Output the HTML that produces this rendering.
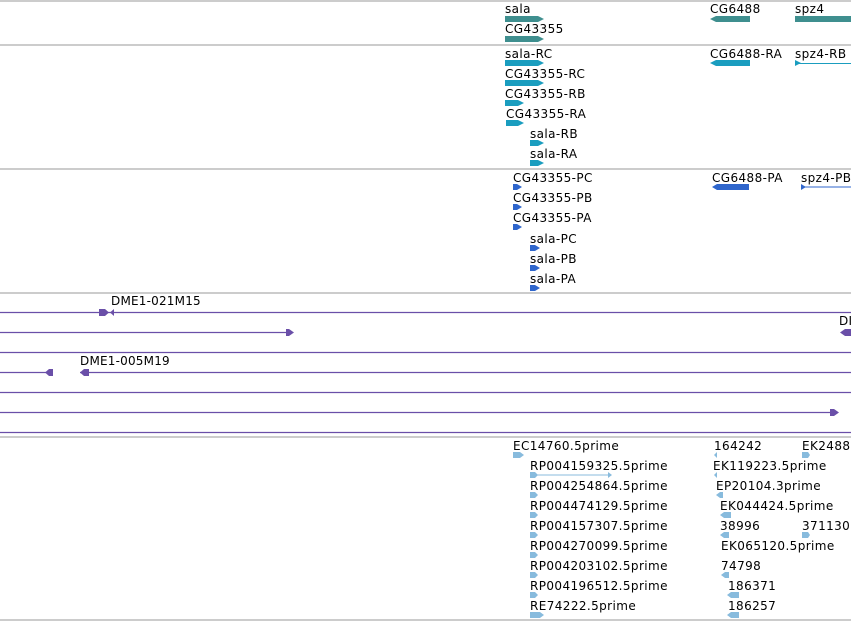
<!DOCTYPE html>
<html><head><meta charset="utf-8"><style>
html,body{margin:0;padding:0;background:#fff;width:851px;height:621px;overflow:hidden}
svg{display:block}
text{font-family:"DejaVu Sans","Liberation Sans",sans-serif;font-size:12px;fill:#000;letter-spacing:0.4px}
.p{font-size:12px;letter-spacing:0.2px}
</style></head><body>
<svg width="851" height="621" viewBox="0 0 851 621">
<g stroke="#bbb" stroke-width="1.5">
<line x1="0" y1="1" x2="851" y2="1"/><line x1="0" y1="45" x2="851" y2="45"/>
<line x1="0" y1="169" x2="851" y2="169"/><line x1="0" y1="293" x2="851" y2="293"/>
<line x1="0" y1="437" x2="851" y2="437"/><line x1="0" y1="620" x2="851" y2="620"/>
</g>
<g fill="#3f8f8f">
<polygon points="505,16 538,16 544,19 538,22 505,22"/>
<polygon points="505,36 538,36 544,39 538,42 505,42"/>
<polygon points="716,16 750,16 750,22 716,22 710,19"/>
<rect x="795" y="16" width="56" height="6"/>
</g>
<text x="505" y="13">sala</text><text x="505" y="33">CG43355</text>
<text x="710" y="13">CG6488</text><text x="795" y="13">spz4</text>
<g fill="#1a9dbf" stroke="#1a9dbf">
<g stroke="none">
<polygon points="505,60 538,60 544,63 538,66 505,66"/>
<polygon points="505,80 538,80 544,83 538,86 505,86"/>
<polygon points="505,100 518,100 524,103 518,106 505,106"/>
<polygon points="506,120 518,120 524,123 518,126 506,126"/>
<polygon points="530,140 538,140 544,143 538,146 530,146"/>
<polygon points="530,160 538,160 544,163 538,166 530,166"/>
<polygon points="716,60 750,60 750,66 716,66 710,63"/>
<polygon points="795,60 801,63 795,66"/>
</g>
<line x1="795" y1="63.5" x2="851" y2="63.5" stroke-width="1"/>
</g>
<text x="505" y="58">sala-RC</text><text x="505" y="78">CG43355-RC</text>
<text x="505" y="98">CG43355-RB</text><text x="506" y="118">CG43355-RA</text>
<text x="530" y="138">sala-RB</text><text x="530" y="158">sala-RA</text>
<text x="710" y="58">CG6488-RA</text><text x="795" y="58">spz4-RB</text>
<g fill="#2f66cc">
<polygon points="513,184 517,184 522,187 517,190 513,190"/>
<polygon points="513,204 517,204 522,207 517,210 513,210"/>
<polygon points="513,224 517,224 522,227 517,230 513,230"/>
<polygon points="530,245 535,245 540,248 535,251 530,251"/>
<polygon points="530,265 535,265 540,268 535,271 530,271"/>
<polygon points="530,285 535,285 540,288 535,291 530,291"/>
<polygon points="717,184 749,184 749,190 717,190 712,187"/>
<polygon points="801,184 806,187 801,190"/>
<rect x="801" y="186.5" width="50" height="1"/>
</g>
<text x="513" y="182">CG43355-PC</text><text x="513" y="202">CG43355-PB</text>
<text x="513" y="222">CG43355-PA</text><text x="530" y="243">sala-PC</text>
<text x="530" y="263">sala-PB</text><text x="530" y="283">sala-PA</text>
<text x="712" y="182">CG6488-PA</text><text x="801" y="182">spz4-PB</text>
<g stroke="#6a4fa8" stroke-width="1.2">
<line x1="0" y1="312.5" x2="851" y2="312.5"/>
<line x1="0" y1="332.5" x2="292" y2="332.5"/>
<line x1="0" y1="352.5" x2="851" y2="352.5"/>
<line x1="0" y1="372.5" x2="52" y2="372.5"/>
<line x1="80" y1="372.5" x2="851" y2="372.5"/>
<line x1="0" y1="392.5" x2="851" y2="392.5"/>
<line x1="0" y1="412.5" x2="838" y2="412.5"/>
<line x1="0" y1="432.5" x2="851" y2="432.5"/>
</g>
<g fill="#6a4fa8">
<polygon points="99,309 105,309 109,312.5 105,316 99,316"/>
<polygon points="110,312.5 114,309 114,316"/>
<polygon points="286,329 289,329 294,332.5 289,336 286,336"/>
<polygon points="845,329 851,329 851,336 845,336 840,332.5"/>
<polygon points="45,372.5 49,369 53,369 53,376 49,376"/>
<polygon points="80,372.5 84,369 89,369 89,376 84,376"/>
<polygon points="830,409 834,409 839,412.5 834,416 830,416"/>
</g>
<text class="p" x="111" y="305">DME1-021M15</text>
<text class="p" x="839" y="325">DI</text>
<text class="p" x="80" y="365">DME1-005M19</text>
<g fill="#88bbdd">
<polygon points="513,452 520,452 524,455 520,458 513,458"/>
<polygon points="530,472 535,472 538,475 535,478 530,478"/>
<rect x="530" y="474.5" width="80" height="1"/>
<polygon points="608,472 612,475 608,478"/>
<polygon points="530,492 535,492 538,495 535,498 530,498"/>
<polygon points="530,512 535,512 538,515 535,518 530,518"/>
<polygon points="530,532 535,532 538,535 535,538 530,538"/>
<polygon points="530,552 535,552 538,555 535,558 530,558"/>
<polygon points="530,572 535,572 538,575 535,578 530,578"/>
<polygon points="530,592 535,592 538,595 535,598 530,598"/>
<polygon points="530,612 540,612 544,615 540,618 530,618"/>
<polygon points="714,455 717,452 717,458"/>
<polygon points="714,475 717,472 717,478"/>
<polygon points="716,495 720,492 723,492 723,498 720,498"/>
<polygon points="720,515 724,512 731,512 731,518 724,518"/>
<polygon points="720,535 724,532 729,532 729,538 724,538"/>
<polygon points="721,575 725,572 729,572 729,578 725,578"/>
<polygon points="727,595 731,592 739,592 739,598 731,598"/>
<polygon points="727,615 731,612 739,612 739,618 731,618"/>
<polygon points="802,452 808,452 810,455 808,458 802,458"/>
<polygon points="802,532 808,532 810,535 808,538 802,538"/>
</g>
<text x="513" y="450">EC14760.5prime</text>
<text x="530" y="470">RP004159325.5prime</text>
<text x="530" y="490">RP004254864.5prime</text>
<text x="530" y="510">RP004474129.5prime</text>
<text x="530" y="530">RP004157307.5prime</text>
<text x="530" y="550">RP004270099.5prime</text>
<text x="530" y="570">RP004203102.5prime</text>
<text x="530" y="590">RP004196512.5prime</text>
<text x="530" y="610">RE74222.5prime</text>
<text x="714" y="450">164242</text>
<text x="713" y="470">EK119223.5prime</text>
<text x="716" y="490">EP20104.3prime</text>
<text x="720" y="510">EK044424.5prime</text>
<text x="720" y="530">38996</text>
<text x="721" y="550">EK065120.5prime</text>
<text x="721" y="570">74798</text>
<text x="728" y="590">186371</text>
<text x="728" y="610">186257</text>
<text x="802" y="450">EK2488</text>
<text x="802" y="530">371130</text>
</svg>
</body></html>
